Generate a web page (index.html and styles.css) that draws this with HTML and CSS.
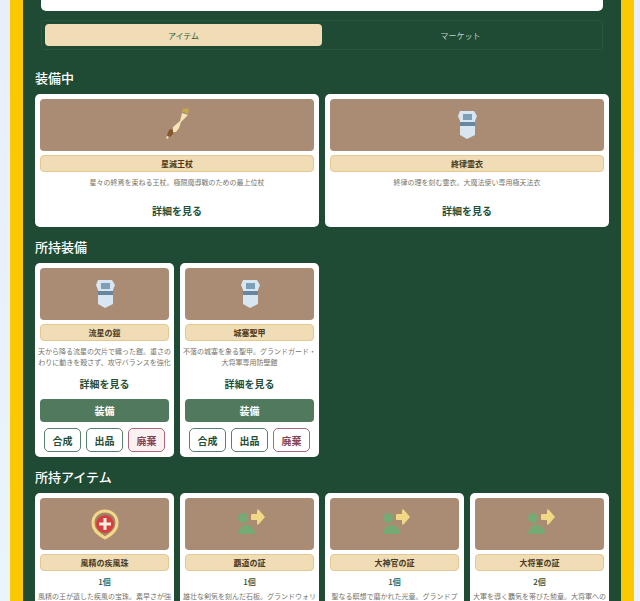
FILE: index.html
```html
<!DOCTYPE html>
<html lang="ja">
<head>
    <meta charset="UTF-8">
    <meta name="viewport" content="width=device-width, initial-scale=1.0">
    <title>アイテム</title>
    <link rel="stylesheet" href="styles.css">
</head>
<body>
    <!-- shared icons -->
    <svg class="sprite" aria-hidden="true">
        <symbol id="icon-wand" viewBox="0 0 36 36">
            <path d="M23 6 L29 8 L22 15 L20 21 L17 25 L14 25 L14 20 L21 14 Z" fill="#f6e3b6"/>
            <path d="M24 1 L26 2 L29 1 L30 5 L28 7 L25 5 L23 5 Z" fill="#c3a94c"/>
            <path d="M11 22 L14 23 L14 27 L11 30 L8 29 L9 25 Z" fill="#83582f"/>
            <path d="M8 29 L10 30 L8 32 L7 31 Z" fill="#f6e3b6"/>
        </symbol>
        <symbol id="icon-armor" viewBox="0 0 36 36">
            <path d="M11 4 H25 L28 9 L26 14 V28 L18 32 L11 28 V14 L9 9 Z" fill="#d8e6f1"/>
            <rect x="14" y="7" width="9" height="6" fill="#7d9fb8"/>
            <rect x="11" y="15" width="15" height="4" fill="#68879f"/>
        </symbol>
        <symbol id="icon-orb" viewBox="0 0 36 36">
            <path d="M18 5 C25 5 30 10 30 17 C30 24 25 28 18 32 C11 28 6 24 6 17 C6 10 11 5 18 5 Z" fill="#a08468" stroke="#f3d88a" stroke-width="3" stroke-linejoin="round"/>
            <circle cx="18" cy="18" r="9" fill="#d63f40"/>
            <path d="M18 12 V24 M12 18 H24" stroke="#fdf0dc" stroke-width="3"/>
        </symbol>
        <symbol id="icon-proof" viewBox="0 0 36 36">
            <circle cx="11" cy="12" r="5" fill="#76aa74"/>
            <path d="M6 28 C7 16 22 16 23 28 Z" fill="#76aa74"/>
            <path d="M20 8 H25 V5 Q25 2 27 4 L33 11 L27 18 Q25 20 25 17 V14 H20 Q19 14 19 13 V9 Q19 8 20 8 Z" fill="#f1d884"/>
        </symbol>
    </svg>

    <main class="panel">
        <div class="status"></div>
        <nav class="tabs">
            <button type="button" class="tab active">アイテム</button>
            <button type="button" class="tab">マーケット</button>
        </nav>

        <h2>装備中</h2>
        <div class="grid equipped">
            <article class="card">
                <div class="image"><svg aria-hidden="true"><use href="#icon-wand"/></svg></div>
                <h3>星滅王杖</h3>
                <p class="desc">星々の終焉を束ねる王杖。極限魔導戦のための最上位杖</p>
                <button type="button" class="detail">詳細を見る</button>
            </article>
            <article class="card">
                <div class="image"><svg aria-hidden="true"><use href="#icon-armor"/></svg></div>
                <h3>終律霊衣</h3>
                <p class="desc">終律の理を刻む霊衣。大魔法使い専用極天法衣</p>
                <button type="button" class="detail">詳細を見る</button>
            </article>
        </div>

        <h2>所持装備</h2>
        <div class="grid">
            <article class="card">
                <div class="image"><svg aria-hidden="true"><use href="#icon-armor"/></svg></div>
                <h3>流星の鎧</h3>
                <p class="desc">天から降る流星の欠片で織った鎧。重さのわりに動きを殺さず、攻守バランスを強化</p>
                <button type="button" class="detail">詳細を見る</button>
                <button type="button" class="btn-equip">装備</button>
                <div class="actions">
                    <button type="button">合成</button>
                    <button type="button">出品</button>
                    <button type="button" class="discard filled">廃棄</button>
                </div>
            </article>
            <article class="card">
                <div class="image"><svg aria-hidden="true"><use href="#icon-armor"/></svg></div>
                <h3>城塞聖甲</h3>
                <p class="desc">不落の城塞を象る聖甲。グランドガード・大将軍専用防壁鎧</p>
                <button type="button" class="detail">詳細を見る</button>
                <button type="button" class="btn-equip">装備</button>
                <div class="actions">
                    <button type="button">合成</button>
                    <button type="button">出品</button>
                    <button type="button" class="discard">廃棄</button>
                </div>
            </article>
        </div>

        <h2>所持アイテム</h2>
        <div class="grid">
            <article class="card">
                <div class="image"><svg aria-hidden="true"><use href="#icon-orb"/></svg></div>
                <h3>風精の疾風珠</h3>
                <p class="count">1個</p>
                <p class="desc">風精の王が遺した疾風の宝珠。素早さが強</p>
            </article>
            <article class="card">
                <div class="image"><svg aria-hidden="true"><use href="#icon-proof"/></svg></div>
                <h3>覇道の証</h3>
                <p class="count">1個</p>
                <p class="desc">雄壮な剣気を刻んだ石板。グランドウォリ</p>
            </article>
            <article class="card">
                <div class="image"><svg aria-hidden="true"><use href="#icon-proof"/></svg></div>
                <h3>大神官の証</h3>
                <p class="count">1個</p>
                <p class="desc">聖なる瞑想で磨かれた光章。グランドプ</p>
            </article>
            <article class="card">
                <div class="image"><svg aria-hidden="true"><use href="#icon-proof"/></svg></div>
                <h3>大将軍の証</h3>
                <p class="count">2個</p>
                <p class="desc">大軍を導く覇気を帯びた勲章。大将軍への</p>
            </article>
        </div>
    </main>
</body>
</html>
```

FILE: styles.css
```css
*{
    margin: 0;
    padding: 0;
    box-sizing: border-box;
}
html{
    overflow: hidden;
}
body{
    background: linear-gradient(#e6effb, #eaf4fb);
    font-family: "Noto Sans CJK JP", sans-serif;
    padding: 0 6px 0 10px;
}
button{
    font-family: inherit;
    border: none;
    cursor: pointer;
}
.sprite{
    display: none;
}
.panel{
    background-color: #1f4a33;
    border: solid #fbc902;
    border-width: 0 13px;
    padding: 0 12px;
}
.status{
    height: 11px;
    margin: 0 6px 9px;
    background-color: white;
    border-radius: 0 0 5px 5px;
}
.tabs{
    display: flex;
    margin: 0 6px;
    padding: 3px;
    border: 1px solid #2b573e;
    border-radius: 4px;
}
.tab{
    flex: 1;
    height: 22px;
    background: none;
    color: #c0d2c4;
    font-size: 8px;
    border-radius: 4px;
}
.tab.active{
    background-color: #f0ddb5;
    color: #2f5a40;
}
h2{
    color: white;
    font-size: 13px;
    font-weight: 500;
    line-height: 20px;
    margin: 10px 0 6px;
}
.tabs + h2{
    margin-top: 18px;
}
.grid{
    display: grid;
    grid-template-columns: repeat(4, 1fr);
    gap: 6px;
    align-items: start;
}
.equipped{
    grid-template-columns: repeat(2, 1fr);
}
.card{
    display: flex;
    flex-direction: column;
    background-color: white;
    border-radius: 5px;
    padding: 5px 0;
    text-align: center;
}
.image{
    height: 52px;
    margin: 0 5px;
    background-color: #a98c73;
    border-radius: 4px;
    display: flex;
    align-items: center;
    justify-content: center;
}
.image svg{
    width: 36px;
    height: 36px;
}
h3{
    margin: 4px 5px 5px;
    background-color: #f0ddb5;
    border: 1px solid #e3c894;
    border-radius: 4px;
    color: #4a3920;
    font-size: 8px;
    line-height: 15px;
}
.count{
    color: #245039;
    font-size: 8px;
    font-weight: 500;
    line-height: 11px;
    margin-bottom: 4px;
}
.desc{
    min-height: 18px;
    padding: 0 2px;
    color: #77746a;
    font-size: 7px;
    line-height: 11px;
}
.detail{
    height: 24px;
    margin-top: 3px;
    background: none;
    color: #245039;
    font-size: 10px;
    font-weight: bold;
}
.btn-equip{
    height: 23px;
    margin: 4px 5px 6px;
    background-color: #50795d;
    border-radius: 4px;
    color: white;
    font-size: 10px;
    font-weight: bold;
}
.actions{
    display: flex;
    gap: 5px;
    margin: 0 9px;
}
.actions button{
    flex: 1;
    height: 24px;
    background-color: white;
    border: 1px solid #59806a;
    border-radius: 5px;
    color: #245039;
    font-size: 10px;
    font-weight: bold;
}
.actions .discard{
    border-color: #a8687a;
    color: #854455;
}
.actions .filled{
    background-color: #fbf1f2;
}
```
